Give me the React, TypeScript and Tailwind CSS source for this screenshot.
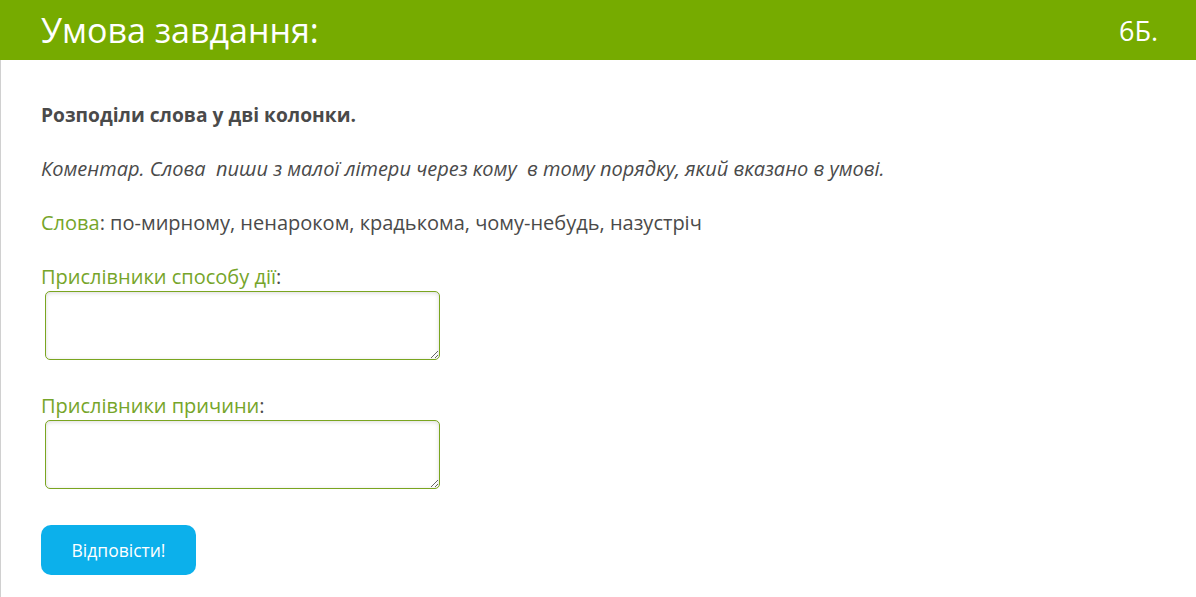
export default function App() {
  return (
    <div className="min-h-[597px] bg-white font-['Open_Sans',sans-serif] text-[#4a4a4a]">
      <header className="flex h-[60px] items-center justify-between bg-[#76ab00] pl-[41px] pr-[38px] text-white">
        <h1 className="text-[34px] leading-none">Умова завдання:</h1>
        <span className="text-[27px] leading-none">6Б.</span>
      </header>
      <main className="border-l border-[#d0d0d0] pl-[40px] pt-[40px] pb-[22px]">
        <p className="text-[19.2px] font-bold leading-[30px]">Розподіли слова у дві колонки.</p>
        <p className="mt-[24px] text-[20px] italic leading-[30px]">
          Коментар. Слова&nbsp; пиши з малої літери через кому&nbsp; в тому порядку, який вказано в умові.
        </p>
        <p className="mt-[24px] text-[20px] leading-[30px]">
          <span className="text-[#76a52a]">Слова</span>: по-мирному, ненароком, крадькома, чому-небудь, назустріч
        </p>
        <div className="mt-[24px] flex flex-col items-start">
          <label className="text-[20px] leading-[30px]">
            <span className="text-[#76a52a]">Прислівники способу дії</span>:
          </label>
          <textarea className="-mt-px ml-[4px] h-[69px] w-[395px] rounded-[5px] border border-[#7aa520] shadow-[inset_0_1px_4px_rgba(0,0,0,0.15)]" />
        </div>
        <div className="mt-[31px] flex flex-col items-start">
          <label className="text-[20px] leading-[30px]">
            <span className="text-[#76a52a]">Прислівники причини</span>:
          </label>
          <textarea className="-mt-px ml-[4px] h-[69px] w-[395px] rounded-[5px] border border-[#7aa520] shadow-[inset_0_1px_4px_rgba(0,0,0,0.15)]" />
        </div>
        <button className="mt-[36px] h-[50px] w-[155px] rounded-[10px] bg-[#0cb0eb] text-[17.5px] text-white">
          Відповісти!
        </button>
      </main>
    </div>
  )
}
